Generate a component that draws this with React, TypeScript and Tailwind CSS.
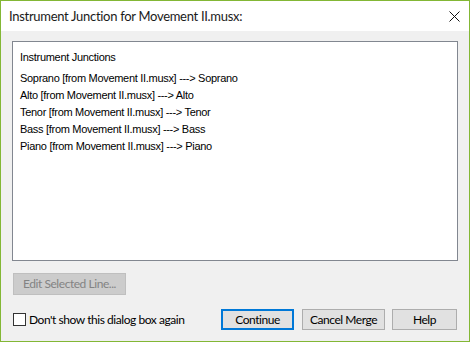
import React from "react";

const lines = [
  "Soprano [from Movement II.musx] ---> Soprano",
  "Alto [from Movement II.musx] ---> Alto",
  "Tenor [from Movement II.musx] ---> Tenor",
  "Bass [from Movement II.musx] ---> Bass",
  "Piano [from Movement II.musx] ---> Piano",
];

const App: React.FC = () => {
  return (
    <div className="w-[470px] h-[342px] border border-[#83b735] flex flex-col bg-[#f0f0f0] font-['Lato',sans-serif] text-black">
      <div className="h-[30px] bg-white flex items-center justify-between pl-[8px] pr-[9px] shrink-0">
        <span className="text-[13px] tracking-[-0.3px] leading-none text-[#1a1a1a] mt-[1px]">Instrument Junction for Movement II.musx:</span>
        <svg width="11" height="11" viewBox="0 0 11 11" className="mt-[1px]">
          <path d="M0.5 0.5 L10.5 10.5 M10.5 0.5 L0.5 10.5" stroke="#111" strokeWidth="1" />
        </svg>
      </div>
      <div className="flex-1 flex flex-col pt-[10px] pl-[11px] pr-[11px] pb-[11px]">
        <div className="h-[220px] bg-white border border-[#828790] pl-[7px] pt-[7px] font-['Liberation_Sans',sans-serif] text-[11px] tracking-[-0.3px] text-black">
          <div className="leading-[17px]">Instrument Junctions</div>
          <div className="mt-[4px] flex flex-col">
            {lines.map((l) => (
              <div key={l} className="leading-[17px]">{l}</div>
            ))}
          </div>
        </div>
        <button
          disabled
          className="mt-[12px] ml-[1px] w-[113px] h-[22px] bg-[#cccccc] border border-[#bfbfbf] text-[12px] tracking-[-0.45px] text-[#838383] flex items-center justify-center"
        >
          Edit Selected Line...
        </button>
        <div className="mt-[14px] flex items-center h-[21px] text-[12px] tracking-[-0.45px]">
          <div className="ml-[1px] flex items-center">
            <div className="w-[13px] h-[13px] border border-[#333333] bg-white" />
            <span className="ml-[3px]">Don't show this dialog box again</span>
          </div>
          <div className="ml-auto flex items-center mr-[1px]">
            <button className="w-[73px] h-[21px] bg-[#e1e1e1] border-2 border-[#0078d7] flex items-center justify-center">
              Continue
            </button>
            <button className="ml-[8px] w-[83px] h-[21px] bg-[#e1e1e1] border border-[#adadad] flex items-center justify-center">
              Cancel Merge
            </button>
            <button className="ml-[7px] w-[65px] h-[21px] bg-[#e1e1e1] border border-[#adadad] flex items-center justify-center">
              Help
            </button>
          </div>
        </div>
      </div>
    </div>
  );
};

export default App;
